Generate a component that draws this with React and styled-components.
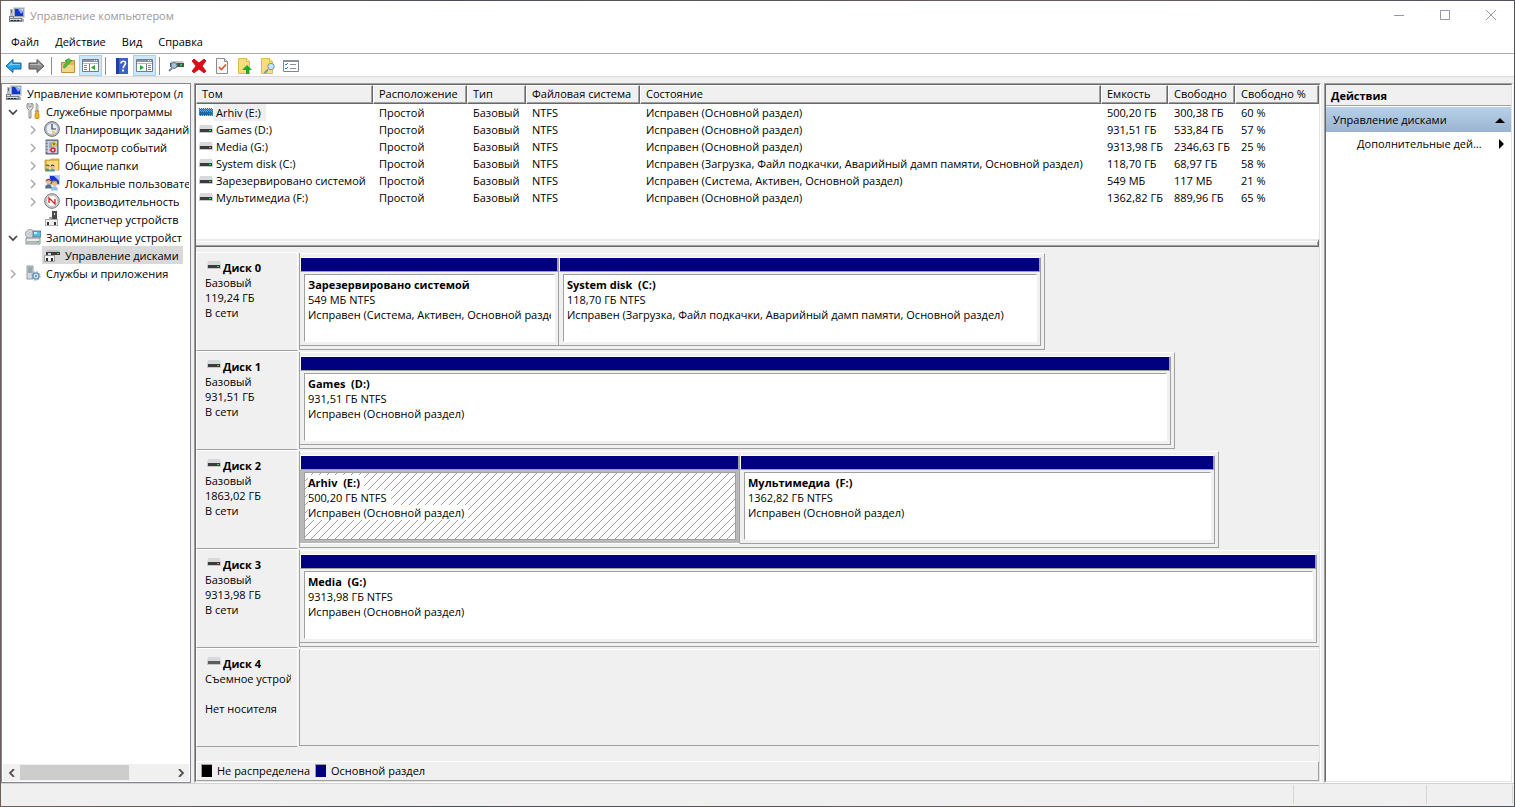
import React from "react";
import styled, { createGlobalStyle, css } from "styled-components";

const face = "#f0f0f0";
const shadow = "#a0a0a0";
const dark = "#696969";
const light = "#e3e3e3";
const navy = "#000080";

const GlobalStyle = createGlobalStyle`
  *, *::before, *::after { box-sizing: border-box; }
  html, body { margin: 0; padding: 0; }
  body {
    font: 11px/15px "Open Sans", "Noto Sans", sans-serif;
    color: #000;
    background: #4c4f58;
  }
  button { font: inherit; color: inherit; border: 0; padding: 0; background: none; }
  ul { list-style: none; margin: 0; padding: 0; }
  svg { display: block; flex: none; }
`;

/* ---------- window frame ---------- */

const Desktop = styled.div`
  min-height: 100vh;
  padding: 1px;
  display: flex;
  background: linear-gradient(90deg, #6d5e5a, #4c4f58 30%, #6b5d5b 70%, #4d535e);
`;

const Window = styled.div`
  flex: 1;
  min-width: 0;
  display: flex;
  flex-direction: column;
  background: ${face};
`;

const TitleBar = styled.header`
  height: 30px;
  display: flex;
  align-items: center;
  gap: 5px;
  padding: 0 0 2px 8px;
  background: #fff;
`;

const Title = styled.h1`
  flex: 1;
  margin: 0;
  font-size: 11px;
  font-weight: 400;
  color: #999;
`;

const Caption = styled.div`
  display: flex;
`;

const CaptionButton = styled.button`
  width: 46px;
  height: 28px;
  display: flex;
  align-items: center;
  justify-content: center;
`;

const MenuBar = styled.nav`
  height: 23px;
  display: flex;
  align-items: center;
  gap: 16px;
  padding-left: 10px;
  background: #fff;
  border-bottom: 1px solid #aaabb3;
`;

const MenuItem = styled.button`
  line-height: 20px;
`;

const ToolBar = styled.div`
  height: 23px;
  display: flex;
  align-items: flex-end;
  padding: 0 1px;
  background: #fff;
  border-bottom: 1px solid #dcdcdc;
`;

const ToolButton = styled.button`
  width: 23px;
  height: 21px;
  display: flex;
  align-items: center;
  justify-content: center;
  border: 1px solid ${(p) => (p.$pressed ? "#99d1ff" : "transparent")};
  background: ${(p) => (p.$pressed ? "#cce8ff" : "transparent")};
`;

const ToolSeparator = styled.span`
  width: 1px;
  height: 18px;
  margin: 0 4px 1px 3px;
  background: #8d8d8d;
`;

const Main = styled.main`
  flex: 1;
  min-height: 0;
  display: grid;
  grid-template-columns: 190px minmax(0, 1fr) 189px;
  column-gap: 3px;
  padding: 6px 1px 0 0;
`;

const StatusBar = styled.footer`
  height: 23px;
  display: grid;
  grid-template-columns: 1fr 133px 86px;
  padding-right: 1px;
  border-top: 1px solid #d2d2d2;
`;

const StatusCell = styled.span`
  margin-top: 1px;
  margin-bottom: 2px;
  border-right: 1px solid #d5d5d5;
`;

/* ---------- console tree ---------- */

const TreePane = styled.aside`
  display: flex;
  flex-direction: column;
  min-width: 0;
  border: 1px solid #828790;
  background: #fff;
`;

const Tree = styled.ul`
  flex: 1;
  padding-left: 1px;
  margin-right: 1px;
  overflow: hidden;
`;

const TreeItem = styled.li`
  height: 18px;
  display: flex;
  align-items: center;
  padding-left: ${(p) => [3, 5, 23][p.$level]}px;
`;

const Expander = styled.span`
  width: ${(p) => (p.$wide ? 18 : 17)}px;
  flex: none;
  display: flex;
  padding-top: 1px;
  padding-left: ${(p) => (p.$wide ? 2 : 0)}px;
`;

const TreeLabel = styled.span`
  flex: none;
  height: 18px;
  display: flex;
  align-items: center;
  gap: 5px;
  padding-right: 4px;
  white-space: nowrap;
  ${(p) =>
    p.$selected &&
    css`
      background: #d9d9d9;
      box-shadow: -2px 0 #d9d9d9;
    `}
`;

const ScrollBar = styled.div`
  height: 17px;
  display: flex;
  align-items: center;
  margin: 0 1px 1px;
  background: ${face};
`;

const ScrollButton = styled.button`
  width: 17px;
  height: 17px;
  display: flex;
  align-items: center;
  justify-content: center;
`;

const ScrollTrack = styled.div`
  flex: 1;
  display: flex;
`;

const ScrollThumb = styled.div`
  width: 72%;
  height: 15px;
  background: #cdcdcd;
`;

/* ---------- centre: volumes and disks ---------- */

const sunken = css`
  border: 1px solid;
  border-color: ${shadow} #fff #fff ${shadow};
`;

const CenterPane = styled.section`
  display: flex;
  min-width: 0;
  ${sunken}
`;

const CenterInner = styled.div`
  flex: 1;
  min-width: 0;
  display: flex;
  flex-direction: column;
  border: 1px solid;
  border-color: ${dark} ${light} ${light} ${dark};
`;

const VolumePane = styled.div`
  height: 154px;
  overflow: hidden;
  background: #fff;
`;

const VolumeTable = styled.table`
  width: 100%;
  table-layout: fixed;
  border-collapse: separate;
  border-spacing: 0;
  white-space: nowrap;
`;

const Col = styled.col`
  width: ${(p) => (p.$w ? `${p.$w}px` : "auto")};
`;

const HeadCell = styled.th`
  height: 19px;
  padding: 0 0 2px 5px;
  text-align: left;
  font-weight: 400;
  line-height: 15px;
  background: ${face};
  border: 1px solid;
  border-color: #fff ${dark} ${dark} #fff;
  box-shadow: inset -1px -1px ${shadow};
`;

const Cell = styled.td`
  height: 17px;
  padding: 0 0 0 6px;
  line-height: 17px;
  overflow: hidden;
`;

const VolumeName = styled.span`
  display: flex;
  align-items: center;
  gap: 1px;
  margin-left: -3px;

  svg {
    margin-bottom: 2px;
  }
`;

const VolumeText = styled.span`
  padding: 0 5px 0 2px;
  background: ${(p) => (p.$selected ? face : "transparent")};
`;

const Splitter = styled.div`
  height: 8px;
  border-top: 2px solid #eaeaea;
  border-bottom: 1px solid ${dark};
  border-right: 1px solid ${dark};
  background: ${face};
  box-shadow: inset 0 1px #fff, inset -1px -1px ${shadow};
`;

const DiskList = styled.div`
  flex: 1;
  padding-top: 5px;
`;

const DiskRow = styled.article`
  height: 99px;
  display: flex;
`;

const DiskLabel = styled.div`
  width: 102px;
  flex: none;
  padding: 7px 6px 0 8px;
  border-left: 1px solid #fff;
  border-top: 1px solid #fff;
  border-bottom: 1px solid ${shadow};
  border-right: 1px solid #fff;
  white-space: nowrap;
  overflow: hidden;
`;

const LabelText = styled.div`
  height: 15px;
  overflow: hidden;
`;

const DiskTitle = styled.h2`
  display: flex;
  align-items: flex-start;
  gap: 2px;
  margin: 0;
  padding-left: 2px;
  font-size: 11px;
  font-weight: 700;
  line-height: 15px;

  svg {
    margin-top: 1px;
  }
`;

const DiskArea = styled.div`
  flex: 1;
  min-width: 0;
  display: flex;
  margin: 1px 0 1px 1px;
  border-left: 1px solid ${shadow};
`;

const DiskBox = styled.div`
  flex: ${(p) => p.$grow} 0 0;
  min-width: 0;
  display: flex;
  padding: 3px ${(p) => (p.$open ? 2 : 3)}px 3px 0;
  border-top: 1px solid #fff;
  border-bottom: 1px solid ${shadow};
  border-right: ${(p) => (p.$open ? "0" : `1px solid ${shadow}`)};
`;

const Rest = styled.div`
  flex: ${(p) => p.$grow} 0 0;
`;

const PartitionFrame = styled.div`
  flex: ${(p) => p.$grow} 0 0;
  min-width: 0;
  display: flex;
  flex-direction: column;
  border-top: 1px solid #fff;
  border-right: 1px solid ${shadow};
  border-bottom: 1px solid ${(p) => (p.$selected ? "#fff" : shadow)};
`;

const PartitionBar = styled.div`
  height: 14px;
  flex: none;
  background: ${navy};
  border-left: 1px solid #fff;
  border-right: 1px solid ${shadow};
  border-bottom: 1px solid ${shadow};
`;

const PartitionBody = styled.div`
  flex: 1;
  min-height: 0;
  display: flex;
  padding: 2px 3px 3px 4px;
  background: ${(p) => (p.$selected ? "#b9b9b9" : face)};
`;

const hatch = `url("data:image/svg+xml,%3Csvg xmlns='http://www.w3.org/2000/svg' width='8' height='8' shape-rendering='crispEdges'%3E%3Cpath d='M0 7h1v1H0zM1 6h1v1H1zM2 5h1v1H2zM3 4h1v1H3zM4 3h1v1H4zM5 2h1v1H5zM6 1h1v1H6zM7 0h1v1H7z' fill='%23a0a0a0'/%3E%3C/svg%3E")`;

const PartitionInner = styled.div`
  flex: 1;
  min-width: 0;
  padding: 2px 3px;
  border: 1px solid;
  border-color: ${(p) => (p.$selected ? shadow : `${shadow} #fff #fff ${shadow}`)};
  background: ${(p) => (p.$selected ? `#fff ${hatch}` : "#fff")};
`;

const PartitionLine = styled.div`
  height: 15px;
  overflow: hidden;
  white-space: pre;
  font-weight: ${(p) => (p.$bold ? 700 : 400)};
`;

const LineText = styled.span`
  display: inline-block;
  padding-right: 4px;
  background: #fff;
`;

const Legend = styled.div`
  height: 20px;
  display: flex;
  align-items: center;
  gap: 5px;
  padding: 0 0 1px 4px;
  border: 1px solid;
  border-color: #fff ${shadow} ${shadow} #fff;
`;

const Swatch = styled.span`
  width: 11px;
  height: 13px;
  border-top: 1px solid ${shadow};
  border-left: 1px solid ${shadow};
  background: ${(p) => p.$color};
`;

/* ---------- actions ---------- */

const ActionsPane = styled.aside`
  display: flex;
  min-width: 0;
  ${sunken}
`;

const ActionsInner = styled.div`
  flex: 1;
  min-width: 0;
  background: #fff;
  border: 1px solid;
  border-color: ${dark} ${light} ${light} ${dark};
`;

const ActionsTitle = styled.h2`
  height: 21px;
  margin: 0 0 1px;
  padding-left: 5px;
  font-size: 11px;
  line-height: 21px;
  font-weight: 700;
  background: ${face};
  border-bottom: 1px solid ${shadow};
`;

const ActionsGroup = styled.button`
  width: 100%;
  height: 25px;
  display: flex;
  align-items: center;
  justify-content: space-between;
  padding: 0 6px 0 7px;
  background: linear-gradient(#b9d1ea, #99b4d1);
`;

const ActionItem = styled.button`
  width: 100%;
  height: 23px;
  display: flex;
  align-items: center;
  justify-content: space-between;
  padding: 0 6px 0 31px;
`;

/* ---------- icons ---------- */

const Svg = ({ w = 16, h = 16, children }) => (
  <svg width={w} height={h} viewBox={`0 0 ${w} ${h}`} aria-hidden="true">
    {children}
  </svg>
);

const ComputerIcon = () => (
  <Svg>
    <path d="M4 0h12v11H4z" fill="#d9d9d0" />
    <path d="M5 1h10v9H5z" fill="#9fa9bd" />
    <path d="M6 2h8v7H6z" fill="#1237c5" />
    <path d="M9 2h5v3l-2 2z" fill="#8aa8f2" />
    <path d="M11 2h3v2z" fill="#d6e2ff" />
    <path d="M1 2h3v8H1z" fill="#b9bcc0" />
    <path d="M2 3h1v3H2z" fill="#5c6670" />
    <path d="M7 11h7v1H7z" fill="#b4b8ba" />
    <path d="M0 9h5v2h8v4H0z" fill="#7b838b" />
    <path d="M1 10h3v1H1zM1 12h11v1H1z" fill="#d9dde0" />
    <path d="M2 13h2v1H2zM5 13h2v1H5zM8 13h2v1H8z" fill="#222b35" />
    <path d="M13 12h2v3h-2z" fill="#aab0b4" />
  </Svg>
);

const ToolsIcon = () => (
  <Svg>
    <path d="M2 1v4l2 2v8h2V7l2-2V1L6 0v4H4V0z" fill="#e2e2e2" stroke="#777" strokeWidth=".8" />
    <path d="M11 0l2 2v6h-2V2z" fill="#cfcfcf" stroke="#777" strokeWidth=".5" />
    <path d="M10 8h4l-1 2 1 1v4l-1 1h-2l-1-1v-4l1-1z" fill="#f4b223" stroke="#b77d0c" strokeWidth=".7" />
  </Svg>
);

const ClockIcon = () => (
  <Svg>
    <circle cx="8" cy="8" r="7.4" fill="#bfc2c7" stroke="#6d7075" />
    <circle cx="8" cy="8" r="5.8" fill="#e8f0fa" stroke="#9da5b0" strokeWidth=".6" />
    <path d="M8 3v5h4" fill="none" stroke="#333c50" strokeWidth="1.2" />
    <path d="M8 13a5 5 0 0 0 4-2L8 9z" fill="#e8c47c" />
  </Svg>
);

const EventsIcon = () => (
  <Svg>
    <path d="M2 1h12v14H2z" fill="#8d97a9" stroke="#525d72" />
    <path d="M4 2h9v12H4z" fill="#c8d5ed" />
    <path d="M5 4h4M5 6h3M5 8h3M5 11h2" stroke="#7488b0" />
    <path d="M1 3h3M1 6h3M1 9h3M1 12h3" stroke="#ddd" />
    <path d="M10 2l3.500 5H6.500z" fill="#ffd31a" stroke="#bb8300" strokeWidth=".5" />
    <path d="M10 4v2" stroke="#222" />
    <circle cx="9" cy="11" r="2.800" fill="#d8303b" />
    <path d="M8 10l2 2M10 10l-2 2" stroke="#fff" strokeWidth=".8" />
  </Svg>
);

const Person = ({ x, y, hair, shirt }) => (
  <g transform={`translate(${x} ${y})`}>
    <circle cx="2.5" cy="2.5" r="2" fill="#e9bc94" />
    <path d="M.5 2.500a2 2 0 0 1 4 0l-2-1z" fill={hair} />
    <path d="M0 7.500c0-4 5-4 5 0z" fill={shirt} />
  </g>
);

const SharedIcon = () => (
  <Svg>
    <path d="M1 3h5l1-1h8v11H1z" fill="#e2b84c" stroke="#b78c24" strokeWidth=".7" />
    <path d="M3 4h11v9H3z" fill="#f9dc83" />
    <Person x={1} y={7} hair="#3c5a36" shirt="#4e9a68" />
    <Person x={6} y={7} hair="#343434" shirt="#4f98b4" />
  </Svg>
);

const UsersIcon = () => (
  <Svg>
    <path d="M5 0h11v10H5z" fill="#c9ccd2" />
    <path d="M6 1h9v8H6z" fill="#1739bf" />
    <path d="M10 1h5v5z" fill="#a9c0fa" />
    <g transform="translate(1 3) scale(1.400)">
      <Person x={0} y={0} hair="#7b5a2a" shirt="#59718f" />
    </g>
    <g transform="translate(7 5) scale(1.400)">
      <Person x={0} y={0} hair="#c79a49" shirt="#8bc4e8" />
    </g>
  </Svg>
);

const PerformanceIcon = () => (
  <Svg>
    <circle cx="8" cy="8" r="7.300" fill="#ddd" stroke="#707070" />
    <circle cx="8" cy="8" r="5.500" fill="#fff" stroke="#999" strokeWidth=".6" />
    <path d="M5 10V5l6 6V6" fill="none" stroke="#cf1f25" strokeWidth="1.300" />
  </Svg>
);

const DeviceIcon = () => (
  <Svg>
    <path d="M8 0h5v8H8z" fill="#4c4c4c" />
    <path d="M10 2h1v2h-1z" fill="#dedede" />
    <path d="M5 6h3v2H5z" fill="#a5a8ab" />
    <path d="M1 8h13v7H1z" fill="#a9acaf" />
    <path d="M2 9h11v5H2z" fill="#f0f0f0" />
    <path d="M3 11h2v3H3zM10 11h2v3h-2z" fill="#333" />
  </Svg>
);

const StorageIcon = () => (
  <Svg>
    <circle cx="5" cy="5" r="4.500" fill="#d3d8dc" stroke="#87909a" strokeWidth=".8" />
    <circle cx="5" cy="5" r="1.300" fill="#fff" stroke="#888" strokeWidth=".5" />
    <path d="M8 2h8v6H8z" fill="#58b9e8" stroke="#4b5e68" strokeWidth=".7" />
    <path d="M9 3h3v2H9z" fill="#c6ecfb" />
    <path d="M1 9h14v6H1z" fill="#e9ebec" stroke="#6e7377" strokeWidth=".8" />
    <path d="M2 12h12v2H2z" fill="#b2b6b9" />
    <path d="M12 12h2v1h-2z" fill="#2bc743" />
  </Svg>
);

const DiskMgmtIcon = () => (
  <Svg>
    <path d="M3 3h12l1 3H2z" fill="#c0c2c4" />
    <path d="M2 5h14v3H2z" fill="#3a3d3f" />
    <path d="M13 6h2v1h-2z" fill="#27dd3c" />
    <path d="M.5 8.500h10v6H.5z" fill="#f4f4f4" stroke="#999" />
    <path d="M2 11h2v3H2zM7 11h2v3H7z" fill="#2c2c2c" />
    <path d="M4 6h3v2H4z" fill="#d8d8d8" />
  </Svg>
);

const ServicesIcon = () => (
  <Svg>
    <path d="M2 1h6v13H2z" fill="#d5dce1" stroke="#77838c" strokeWidth=".8" />
    <path d="M3 3h4M3 5h4M3 7h4" stroke="#5d6f7c" />
    <circle cx="11" cy="11" r="3" fill="#dcebf8" stroke="#6f97bd" strokeWidth="1.500" />
    <circle cx="11" cy="11" r="4.200" fill="none" stroke="#6f97bd" strokeWidth="1" strokeDasharray="1.600 1.700" />
    <circle cx="11" cy="11" r="1" fill="#4e7cab" />
  </Svg>
);

const DriveIcon = ({ lit = true, selected = false }) => (
  <Svg w={14} h={8}>
    <path d="M1 0h12l1 4H0z" fill="#d8d9dc" />
    <path d="M0 4h14v4H0z" fill="#c6c7ca" />
    <path d="M1 4h12v3H1z" fill={lit ? "#3b3b3b" : "#5c5c5c"} />
    {lit && <path d="M10 5h2v1h-2z" fill="#30e040" />}
    {selected &&
      [0, 1, 2, 3, 4, 5, 6, 7].map((y) => (
        <path key={y} d={`M${y % 2} ${y}.5h14`} stroke="#0078d7" strokeDasharray="1 1" />
      ))}
    {selected && <path d="M0 1h14v6H0z" fill="#0078d7" opacity=".6" />}
  </Svg>
);

const ArrowIcon = ({ back }) => (
  <Svg w={17} h={16}>
    <g transform={back ? undefined : "translate(17 0) scale(-1 1)"}>
      <path
        d="M1 8l7-6.500V5h8v6H8v3.500z"
        fill={back ? "#27a4e8" : "#888"}
        stroke={back ? "#1a5e9c" : "#555"}
        strokeLinejoin="round"
      />
      <path d="M3 8l4-4v2h8v1H7z" fill={back ? "#7fd3fa" : "#bbb"} />
    </g>
  </Svg>
);

const FolderUpIcon = () => (
  <Svg>
    <path d="M1.500 4.500h4l1-2h8v12h-13z" fill="#e0b85c" stroke="#b8913a" />
    <path d="M2 7h12v7H2z" fill="#f3d68a" />
    <path d="M3 9c1-2 2-3 3.500-4V3H5l3.500-2.500L12 3h-2c0 3-3 4-5 7z" fill="#4cc43e" stroke="#278524" strokeWidth=".6" />
  </Svg>
);

const PaneIcon = ({ right }) => (
  <Svg w={17} h={15}>
    <path d="M.5 1.500h16v12H.5z" fill="#fff" stroke="#737b85" />
    <path d="M1 2h15v2H1z" fill="#8c959f" />
    <path d="M12 2.500h1M14 2.500h1" stroke="#fff" />
    <path d="M1 5.500h15" stroke="#b3bac2" />
    <path d={right ? "M10.500 6v7" : "M7.500 6v7"} stroke="#737b85" />
    <path d={right ? "M12 7.500h3M12 9.500h3M12 11.500h3" : "M2 7.500h3M2 9.500h3M2 11.500h3"} stroke="#7b848f" />
    <path d={right ? "M4 7v5l4-2.500z" : "M13 7v5l-4-2.500z"} fill="#2aa52b" />
  </Svg>
);

const HelpIcon = () => (
  <Svg w={14} h={16}>
    <path d="M1 0h12v16H1z" fill="#3c62c8" />
    <path d="M1 0h3v16H1z" fill="#203f9c" />
    <path d="M6 5.500c0-3 4.500-3 4.500-.3 0 2-2.250 2.300-2.250 5" fill="none" stroke="#fff" strokeWidth="1.600" />
    <path d="M7 11.500h2v2H7z" fill="#fff" />
  </Svg>
);

const DiskSearchIcon = () => (
  <Svg>
    <path d="M3 3h12l1 3H2z" fill="#c5c7c9" />
    <path d="M2 5h14v4H2z" fill="#4c5154" />
    <path d="M12 6h2v2h-2z" fill="#27c84b" />
    <circle cx="6" cy="7.500" r="3" fill="#a5c4d8" stroke="#61798a" />
    <path d="M4 10l-3 3" stroke="#748795" strokeWidth="1.800" />
  </Svg>
);

const DeleteIcon = () => (
  <Svg>
    <path d="M1 3l2-2 5 4 5-4 2 2-4 5 4 5-2 2-5-4-5 4-2-2 4-5z" fill="#e00b16" stroke="#a9000a" strokeWidth=".7" />
  </Svg>
);

const CheckDocIcon = () => (
  <Svg w={14} h={16}>
    <path d="M1.500.5h8l3 3v12h-11z" fill="#f8f8f8" stroke="#8d8d8d" />
    <path d="M9.500.5v3h3" fill="#ddd" stroke="#8d8d8d" />
    <path d="M4 9l2.500 2.500L11 6.500" fill="none" stroke="#e3562a" strokeWidth="1.700" />
  </Svg>
);

const YellowDoc = () => (
  <>
    <path d="M1.500.5h8l3 3v12h-11z" fill="#fadc78" stroke="#dfb951" />
    <path d="M9.500.5v3h3" fill="#fff0b5" stroke="#dfb951" />
  </>
);

const DocUpIcon = () => (
  <Svg>
    <YellowDoc />
    <path d="M10 7l5 5h-3v4H9v-4H5z" fill="#20a72c" />
  </Svg>
);

const DocSearchIcon = () => (
  <Svg>
    <YellowDoc />
    <circle cx="11" cy="8.500" r="3.200" fill="#c8e4f4" stroke="#7197b3" />
    <path d="M8 11.500L4.500 15" stroke="#7895a8" strokeWidth="1.800" />
  </Svg>
);

const ListIcon = () => (
  <Svg w={16} h={14}>
    <path d="M.5 1.500h15v11H.5z" fill="#fff" stroke="#7e868e" />
    <path d="M0 1h16v2H0z" fill="#8a9299" />
    <path d="M2 5l1 1 2-2M2 9l1 1 2-2" fill="none" stroke="#2d83d6" />
    <path d="M7 5.500h6M7 9.500h6" stroke="#8a9299" />
  </Svg>
);

const Chevron = ({ open }) => (
  <Svg w={10} h={10}>
    <path
      d={open ? "M1 3l4 4 4-4" : "M3 1l4 4-4 4"}
      fill="none"
      stroke={open ? "#404040" : "#a6a6a6"}
      strokeWidth={open ? 1.6 : 1.4}
    />
  </Svg>
);

const ScrollArrow = ({ right }) => (
  <Svg w={8} h={8}>
    <path d={right ? "M2 0l4 4-4 4" : "M6 0L2 4l4 4"} fill="none" stroke="#505050" strokeWidth="1.800" />
  </Svg>
);

/* ---------- data ---------- */

const tree = [
  { level: 0, icon: ComputerIcon, text: "Управление компьютером (л" },
  { level: 1, icon: ToolsIcon, text: "Служебные программы", open: true },
  { level: 2, icon: ClockIcon, text: "Планировщик заданий", open: false },
  { level: 2, icon: EventsIcon, text: "Просмотр событий", open: false },
  { level: 2, icon: SharedIcon, text: "Общие папки", open: false },
  { level: 2, icon: UsersIcon, text: "Локальные пользовате", open: false },
  { level: 2, icon: PerformanceIcon, text: "Производительность", open: false },
  { level: 2, icon: DeviceIcon, text: "Диспетчер устройств" },
  { level: 1, icon: StorageIcon, text: "Запоминающие устройст", open: true },
  { level: 2, icon: DiskMgmtIcon, text: "Управление дисками", selected: true },
  { level: 1, icon: ServicesIcon, text: "Службы и приложения", open: false },
];

const columns = [
  ["Том", 177],
  ["Расположение", 94],
  ["Тип", 59],
  ["Файловая система", 114],
  ["Состояние", null],
  ["Емкость", 67],
  ["Свободно", 67],
  ["Свободно %", 84],
];

const ok = "Исправен (Основной раздел)";
const boot = "Исправен (Загрузка, Файл подкачки, Аварийный дамп памяти, Основной раздел)";
const system = "Исправен (Система, Активен, Основной раздел)";

const volumes = [
  ["Arhiv (E:)", ok, "500,20 ГБ", "300,38 ГБ", "60 %"],
  ["Games (D:)", ok, "931,51 ГБ", "533,84 ГБ", "57 %"],
  ["Media (G:)", ok, "9313,98 ГБ", "2346,63 ГБ", "25 %"],
  ["System disk (C:)", boot, "118,70 ГБ", "68,97 ГБ", "58 %"],
  ["Зарезервировано системой", system, "549 МБ", "117 МБ", "21 %"],
  ["Мультимедиа (F:)", ok, "1362,82 ГБ", "889,96 ГБ", "65 %"],
];

const disks = [
  {
    name: "Диск 0",
    lines: ["Базовый", "119,24 ГБ", "В сети"],
    grow: 741,
    rest: 274,
    parts: [
      { grow: 258, name: "Зарезервировано системой", size: "549 МБ NTFS", state: system },
      { grow: 481, name: "System disk  (C:)", size: "118,70 ГБ NTFS", state: boot },
    ],
  },
  {
    name: "Диск 1",
    lines: ["Базовый", "931,51 ГБ", "В сети"],
    grow: 871,
    rest: 144,
    parts: [{ grow: 1, name: "Games  (D:)", size: "931,51 ГБ NTFS", state: ok }],
  },
  {
    name: "Диск 2",
    lines: ["Базовый", "1863,02 ГБ", "В сети"],
    grow: 915,
    rest: 100,
    parts: [
      { grow: 439, name: "Arhiv  (E:)", size: "500,20 ГБ NTFS", state: ok, selected: true },
      { grow: 474, name: "Мультимедиа  (F:)", size: "1362,82 ГБ NTFS", state: ok },
    ],
  },
  {
    name: "Диск 3",
    lines: ["Базовый", "9313,98 ГБ", "В сети"],
    grow: 1,
    rest: 0,
    parts: [{ grow: 1, name: "Media  (G:)", size: "9313,98 ГБ NTFS", state: ok }],
  },
  {
    name: "Диск 4",
    lines: ["Съемное устройство", "", "Нет носителя"],
    grow: 1,
    rest: 0,
    removable: true,
    parts: [],
  },
];

const tools = [
  ["Назад", <ArrowIcon back />],
  ["Вперед", <ArrowIcon />],
  null,
  ["Вверх", <FolderUpIcon />],
  ["Дерево консоли", <PaneIcon />, true],
  null,
  ["Справка", <HelpIcon />],
  ["Панель действий", <PaneIcon right />, true],
  null,
  ["Обновить диски", <DiskSearchIcon />],
  ["Удалить", <DeleteIcon />],
  ["Проверить", <CheckDocIcon />],
  ["Открыть", <DocUpIcon />],
  ["Проводник", <DocSearchIcon />],
  ["Свойства", <ListIcon />],
];

/* ---------- parts ---------- */

const Partition = ({ part }) => (
  <PartitionFrame $grow={part.grow} $selected={part.selected}>
    <PartitionBar />
    <PartitionBody $selected={part.selected}>
      <PartitionInner $selected={part.selected}>
        <PartitionLine $bold>
          <LineText>{part.name}</LineText>
        </PartitionLine>
        <PartitionLine>
          <LineText>{part.size}</LineText>
        </PartitionLine>
        <PartitionLine>
          <LineText>{part.state}</LineText>
        </PartitionLine>
      </PartitionInner>
    </PartitionBody>
  </PartitionFrame>
);

const Disk = ({ disk }) => (
  <DiskRow>
    <DiskLabel>
      <DiskTitle>
        <DriveIcon lit={!disk.removable} />
        {disk.name}
      </DiskTitle>
      {disk.lines.map((line, i) => (
        <LabelText key={i}>{line}</LabelText>
      ))}
    </DiskLabel>
    <DiskArea>
      <DiskBox $grow={disk.grow} $open={disk.rest === 0}>
        {disk.parts.map((part) => (
          <Partition key={part.name} part={part} />
        ))}
      </DiskBox>
      {disk.rest > 0 && <Rest $grow={disk.rest} />}
    </DiskArea>
  </DiskRow>
);

export default function App() {
  return (
    <Desktop>
      <GlobalStyle />
      <Window>
        <TitleBar>
          <ComputerIcon />
          <Title>Управление компьютером</Title>
          <Caption>
            <CaptionButton aria-label="Свернуть">
              <Svg w={10} h={10}>
                <path d="M0 5.500h10" stroke="#999" />
              </Svg>
            </CaptionButton>
            <CaptionButton aria-label="Развернуть">
              <Svg w={10} h={10}>
                <path d="M.5.5h9v9h-9z" fill="none" stroke="#999" />
              </Svg>
            </CaptionButton>
            <CaptionButton aria-label="Закрыть">
              <Svg w={10} h={10}>
                <path d="M0 0l10 10M10 0L0 10" stroke="#999" />
              </Svg>
            </CaptionButton>
          </Caption>
        </TitleBar>
        <MenuBar>
          {["Файл", "Действие", "Вид", "Справка"].map((item) => (
            <MenuItem key={item}>{item}</MenuItem>
          ))}
        </MenuBar>
        <ToolBar>
          {tools.map((tool, i) =>
            tool ? (
              <ToolButton key={i} aria-label={tool[0]} $pressed={tool[2]}>
                {tool[1]}
              </ToolButton>
            ) : (
              <ToolSeparator key={i} />
            )
          )}
        </ToolBar>
        <Main>
          <TreePane>
            <Tree>
              {tree.map((node) => (
                <TreeItem key={node.text} $level={node.level}>
                  {node.level > 0 && (
                    <Expander $wide={node.level === 2}>
                      {node.open !== undefined && <Chevron open={node.open} />}
                    </Expander>
                  )}
                  <TreeLabel $selected={node.selected}>
                    <node.icon />
                    {node.text}
                  </TreeLabel>
                </TreeItem>
              ))}
            </Tree>
            <ScrollBar>
              <ScrollButton aria-label="Влево">
                <ScrollArrow />
              </ScrollButton>
              <ScrollTrack>
                <ScrollThumb />
              </ScrollTrack>
              <ScrollButton aria-label="Вправо">
                <ScrollArrow right />
              </ScrollButton>
            </ScrollBar>
          </TreePane>

          <CenterPane>
            <CenterInner>
              <VolumePane>
                <VolumeTable>
                  <colgroup>
                    {columns.map(([name, w]) => (
                      <Col key={name} $w={w} />
                    ))}
                  </colgroup>
                  <thead>
                    <tr>
                      {columns.map(([name]) => (
                        <HeadCell key={name}>{name}</HeadCell>
                      ))}
                    </tr>
                  </thead>
                  <tbody>
                    {volumes.map(([name, state, size, free, percent], i) => (
                      <tr key={name}>
                        <Cell>
                          <VolumeName>
                            <DriveIcon selected={i === 0} />
                            <VolumeText $selected={i === 0}>{name}</VolumeText>
                          </VolumeName>
                        </Cell>
                        <Cell>Простой</Cell>
                        <Cell>Базовый</Cell>
                        <Cell>NTFS</Cell>
                        <Cell>{state}</Cell>
                        <Cell>{size}</Cell>
                        <Cell>{free}</Cell>
                        <Cell>{percent}</Cell>
                      </tr>
                    ))}
                  </tbody>
                </VolumeTable>
              </VolumePane>
              <Splitter />
              <DiskList>
                {disks.map((disk) => (
                  <Disk key={disk.name} disk={disk} />
                ))}
              </DiskList>
              <Legend>
                <Swatch $color="#000" />
                <span>Не распределена</span>
                <Swatch $color={navy} />
                <span>Основной раздел</span>
              </Legend>
            </CenterInner>
          </CenterPane>

          <ActionsPane>
            <ActionsInner>
              <ActionsTitle>Действия</ActionsTitle>
              <ActionsGroup>
                Управление дисками
                <Svg w={10} h={6}>
                  <path d="M0 6l5-5 5 5z" />
                </Svg>
              </ActionsGroup>
              <ActionItem>
                Дополнительные дей...
                <Svg w={6} h={10}>
                  <path d="M0 0l5 5-5 5z" />
                </Svg>
              </ActionItem>
            </ActionsInner>
          </ActionsPane>
        </Main>
        <StatusBar>
          <StatusCell />
          <StatusCell />
          <StatusCell />
        </StatusBar>
      </Window>
    </Desktop>
  );
}
